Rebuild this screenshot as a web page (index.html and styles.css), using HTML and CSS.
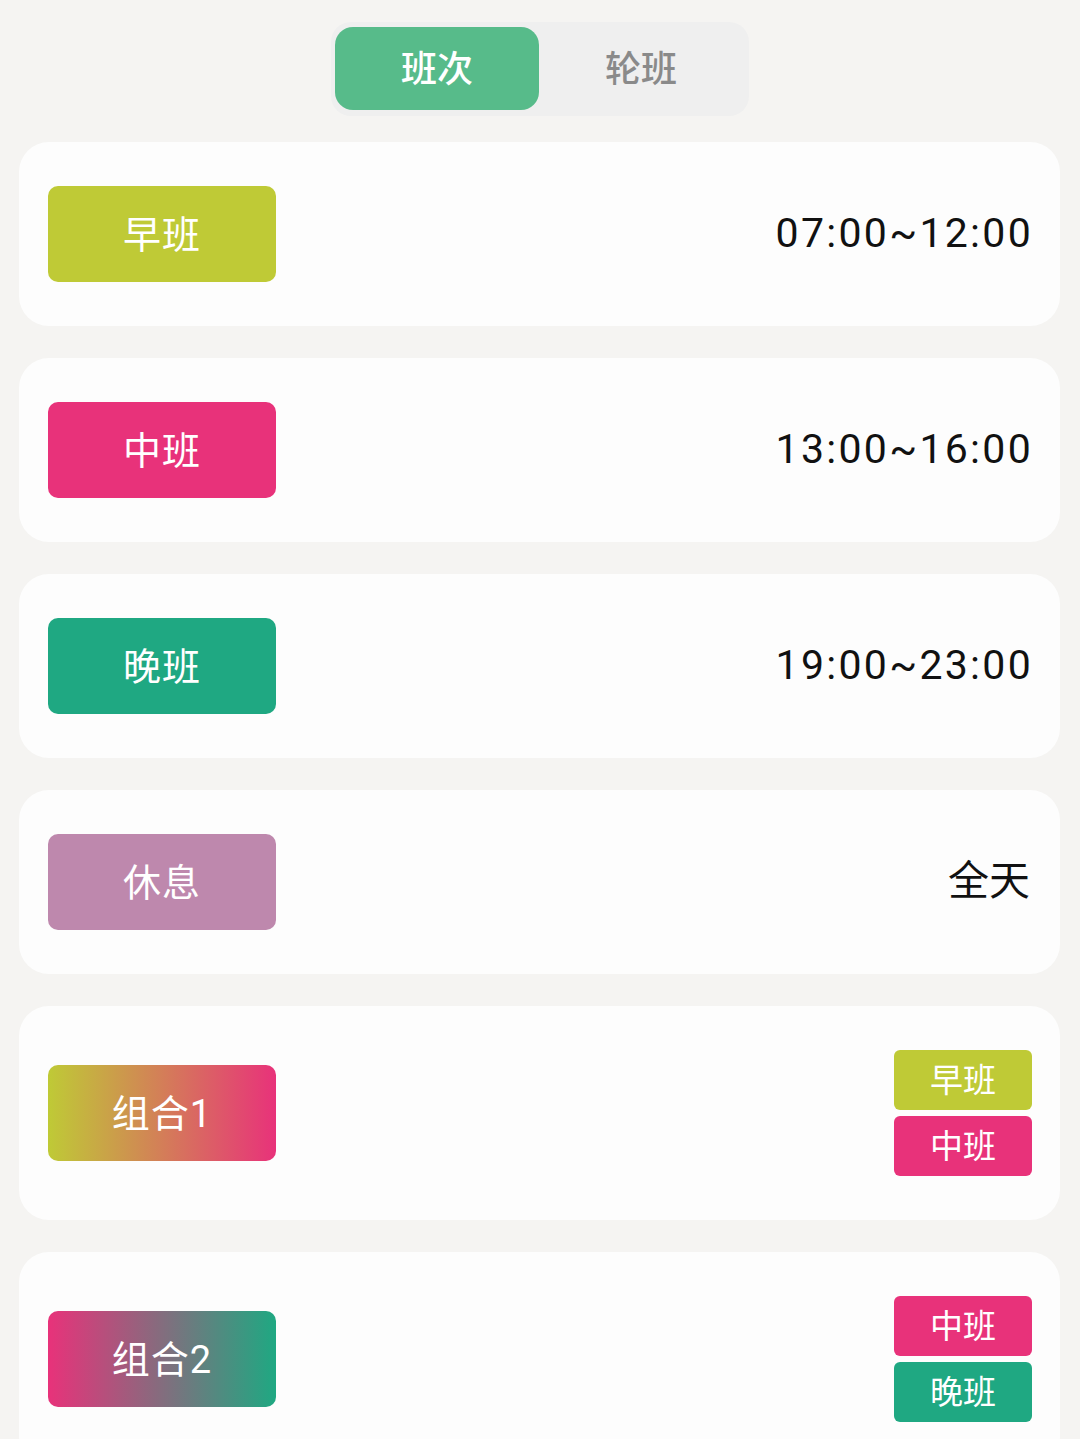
FILE: index.html
```html
<!DOCTYPE html>
<html lang="zh-CN">
<head>
    <meta charset="UTF-8">
    <meta name="viewport" content="width=device-width, initial-scale=1.0">
    <title>班次</title>
    <link rel="stylesheet" href="styles.css">
</head>
<body>
    <div class="tabs">
        <div class="tab active">班次</div>
        <div class="tab">轮班</div>
    </div>

    <div class="list">
        <div class="card">
            <div class="badge early">早班</div>
            <div class="time">07:00~12:00</div>
        </div>
        <div class="card">
            <div class="badge middle">中班</div>
            <div class="time">13:00~16:00</div>
        </div>
        <div class="card">
            <div class="badge night">晚班</div>
            <div class="time">19:00~23:00</div>
        </div>
        <div class="card">
            <div class="badge rest">休息</div>
            <div class="time cn">全天</div>
        </div>
        <div class="card">
            <div class="badge combo1">组合1</div>
            <div class="subs">
                <div class="sub early">早班</div>
                <div class="sub middle">中班</div>
            </div>
        </div>
        <div class="card">
            <div class="badge combo2">组合2</div>
            <div class="subs">
                <div class="sub middle">中班</div>
                <div class="sub night">晚班</div>
            </div>
        </div>
    </div>
</body>
</html>
```

FILE: styles.css
```css
* {
    margin: 0;
    padding: 0;
    box-sizing: border-box;
}

body {
    background: #f5f4f2;
    font-family: Roboto, "Noto Sans CJK SC", sans-serif;
    padding-top: 22px;
    height: 1439px;
    overflow: hidden;
}

/* 顶部切换 */
.tabs {
    width: 418px;
    height: 94px;
    margin: 0 auto;
    background: #efefef;
    border-radius: 20px;
    padding: 5px 4px 6px;
    display: flex;
}

.tab {
    width: 204px;
    display: flex;
    align-items: center;
    justify-content: center;
    font-size: 36px;
    font-weight: 500;
    color: #8a8a8a;
    border-radius: 18px;
    padding-bottom: 6px;
}

.tab.active {
    background: #57bb8a;
    color: #ffffff;
}

/* 列表 */
.list {
    margin-top: 26px;
    padding: 0 20px 0 19px;
    display: flex;
    flex-direction: column;
    gap: 32px;
}

.card {
    background: #fdfdfd;
    border-radius: 30px;
    min-height: 184px;
    padding: 44px 29px;
    display: flex;
    align-items: center;
    justify-content: space-between;
}

.badge {
    width: 228px;
    height: 96px;
    border-radius: 10px;
    display: flex;
    align-items: center;
    justify-content: center;
    color: #ffffff;
    font-size: 38px;
    letter-spacing: 1px;
    padding-bottom: 6px;
}

.time {
    font-size: 41px;
    line-height: 1;
    color: #111111;
    letter-spacing: 2.3px;
    margin-right: -2px;
    margin-bottom: 2px;
}

.time.cn {
    letter-spacing: 0;
    margin-right: 1px;
    margin-bottom: 2px;
}

.subs {
    display: flex;
    flex-direction: column;
    gap: 6px;
    margin-right: -1px;
}

.sub {
    width: 138px;
    height: 60px;
    border-radius: 6px;
    display: flex;
    align-items: center;
    justify-content: center;
    color: #ffffff;
    font-size: 33px;
    padding-bottom: 5px;
}

.early {
    background: #bfca36;
}

.middle {
    background: #e8327a;
}

.night {
    background: #1fa882;
}

.rest {
    background: #be88ad;
}

.combo1 {
    background: linear-gradient(to right, #bfca36, #e8327a);
}

.combo2 {
    background: linear-gradient(to right, #e8327a, #1fa882);
}
```
